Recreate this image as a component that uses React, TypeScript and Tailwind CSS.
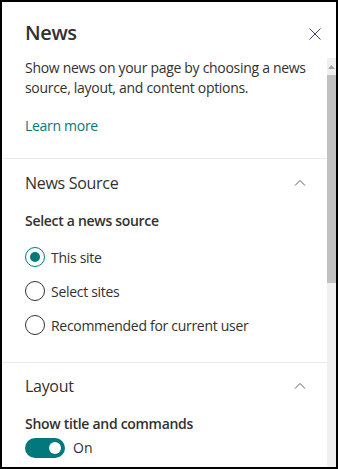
import { useState } from "react";

function Chevron() {
  return (
    <svg width="12" height="8" viewBox="0 0 12 8" fill="none">
      <path d="M1 6.5 L6 1.5 L11 6.5" stroke="#605e5c" strokeWidth="1" />
    </svg>
  );
}

function Radio({ label, checked }: { label: string; checked?: boolean }) {
  return (
    <div className="flex items-center h-[34px]">
      <span
        className={
          checked
            ? "w-5 h-5 rounded-full border border-[#03787c] flex items-center justify-center"
            : "w-5 h-5 rounded-full border border-[#323130]"
        }
      >
        {checked && <span className="w-[10px] h-[10px] rounded-full bg-[#03787c]" />}
      </span>
      <span className="ml-[6px] text-[14px] tracking-[-0.3px] text-[#323130]">{label}</span>
    </div>
  );
}

export default function App() {
  const [on] = useState(true);
  return (
    <div className="w-[338px] h-[469px] border-2 border-black bg-white flex flex-col overflow-hidden font-['Open_Sans',sans-serif] text-[#323130]">
      <div className="h-[56px] flex items-start justify-between pl-[23px] pr-[15px] pt-[17px]">
        <h1 className="text-[20px] leading-7 font-semibold tracking-[-0.4px]">News</h1>
        <svg width="12" height="12" viewBox="0 0 12 12" className="mt-[9px]">
          <path d="M0.5 0.5 L11.5 11.5 M11.5 0.5 L0.5 11.5" stroke="#4a3d6b" strokeWidth="1" />
        </svg>
      </div>
      <div className="flex flex-1 min-h-0">
        <div className="flex-1">
          <div className="pl-[23px] pr-[12px] text-[14px] tracking-[-0.3px]">
            <p className="leading-5">
              Show news on your page by choosing a news source, layout, and content options.
            </p>
            <p className="mt-[18px] leading-5 text-[#03787c]">Learn more</p>
          </div>
          <div className="mt-[22px] border-t border-[#edebe9]" />
          <div className="pl-[23px] pr-[21px]">
            <div className="flex items-center justify-between pt-[10px] h-[38px]">
              <span className="text-[16px] tracking-[-0.3px]">News Source</span>
              <Chevron />
            </div>
            <p className="mt-[14px] text-[14px] tracking-[-0.3px] font-semibold leading-5">Select a news source</p>
            <div className="mt-[9px]">
              <Radio label="This site" checked />
              <Radio label="Select sites" />
              <Radio label="Recommended for current user" />
            </div>
          </div>
          <div className="mt-[20px] border-t border-[#edebe9]" />
          <div className="pl-[23px] pr-[21px]">
            <div className="flex items-center justify-between pt-[9px] h-[37px]">
              <span className="text-[16px] tracking-[-0.3px]">Layout</span>
              <Chevron />
            </div>
            <p className="mt-[14px] text-[14px] tracking-[-0.3px] font-semibold leading-5">Show title and commands</p>
            <div className="mt-[3px] flex items-center">
              <span className={on ? "w-10 h-5 rounded-full bg-[#03787c] flex items-center justify-end pr-1" : ""}>
                <span className="w-3 h-3 rounded-full bg-white" />
              </span>
              <span className="ml-2 text-[14px]">On</span>
            </div>
          </div>
        </div>
        <div className="w-[9px] bg-[#f0f0f0] flex flex-col">
          <div className="h-[17px] flex items-center justify-center">
            <svg width="7" height="4" viewBox="0 0 7 4">
              <path d="M0 4 L3.5 0 L7 4 Z" fill="#a3a3a3" />
            </svg>
          </div>
          <div className="h-[208px] bg-[#c1c1c1]" />
        </div>
      </div>
    </div>
  );
}
